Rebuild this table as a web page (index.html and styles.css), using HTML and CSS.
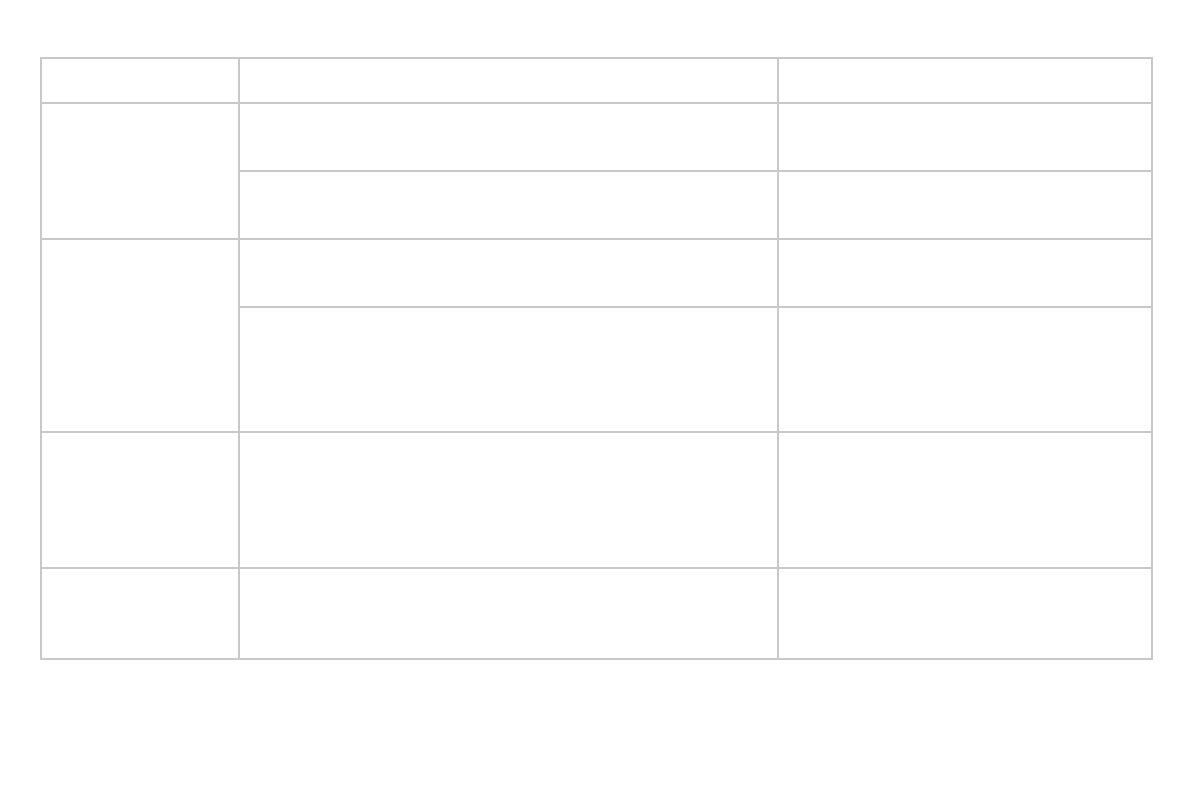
FILE: index.html
```html
<!DOCTYPE html>
<html lang="en">
<head>
<meta charset="utf-8">
<title>Table</title>
<link rel="stylesheet" href="styles.css">
</head>
<body>
<div class="grid">
  <div class="cell c1 r1"></div>
  <div class="cell c2 r1"></div>
  <div class="cell c3 r1"></div>

  <div class="cell c1 span-23"></div>
  <div class="cell c2 r2"></div>
  <div class="cell c3 r2"></div>
  <div class="cell c2 r3"></div>
  <div class="cell c3 r3"></div>

  <div class="cell c1 span-45"></div>
  <div class="cell c2 r4"></div>
  <div class="cell c3 r4"></div>
  <div class="cell c2 r5"></div>
  <div class="cell c3 r5"></div>

  <div class="cell c1 r6"></div>
  <div class="cell c2 r6"></div>
  <div class="cell c3 r6"></div>

  <div class="cell c1 r7"></div>
  <div class="cell c2 r7"></div>
  <div class="cell c3 r7"></div>
</div>
</body>
</html>
```

FILE: styles.css
```css
html, body {
  margin: 0;
  padding: 0;
  background: #ffffff;
  font-family: "Liberation Sans", Arial, sans-serif;
}
body {
  padding: 57px 0 0 40px;
}
.grid {
  display: grid;
  width: 1109px;
  grid-template-columns: 196px 537px 372px;
  grid-template-rows: 43px 66px 66px 66px 123px 134px 89px;
  gap: 2px;
  padding: 2px;
  background: #c8c8c8;
}
.cell {
  background: #ffffff;
}
.c1 { grid-column: 1; }
.c2 { grid-column: 2; }
.c3 { grid-column: 3; }
.r1 { grid-row: 1; }
.r2 { grid-row: 2; }
.r3 { grid-row: 3; }
.r4 { grid-row: 4; }
.r5 { grid-row: 5; }
.r6 { grid-row: 6; }
.r7 { grid-row: 7; }
.span-23 { grid-row: 2 / 4; }
.span-45 { grid-row: 4 / 6; }
```
